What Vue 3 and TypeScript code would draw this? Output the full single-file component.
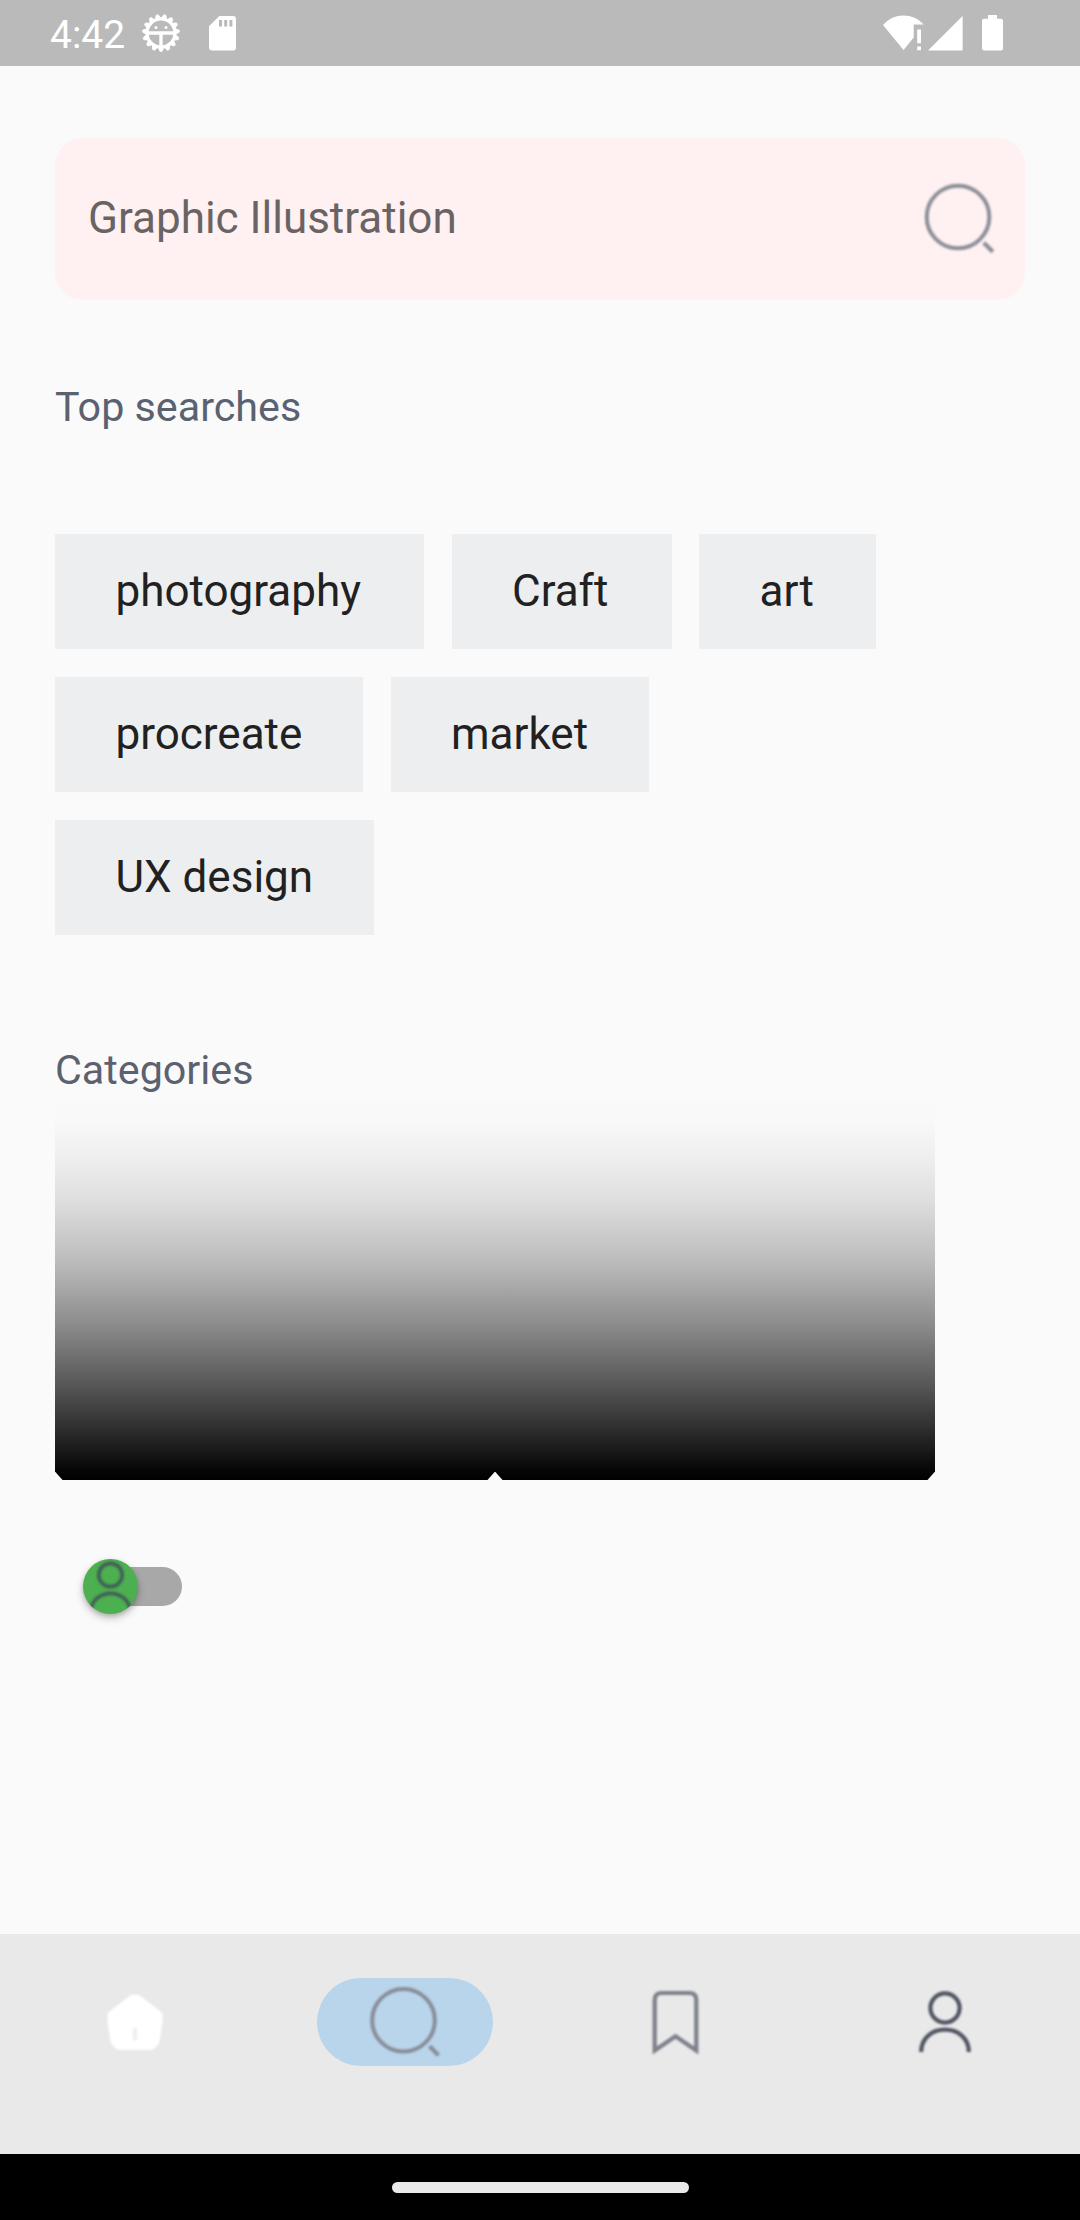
<script setup lang="ts">
interface Term {
  label: string
  width: number
}

const topSearches: Term[] = [
  { label: 'photography', width: 369 },
  { label: 'Craft', width: 220 },
  { label: 'art', width: 176.5 },
  { label: 'procreate', width: 308 },
  { label: 'market', width: 258.5 },
  { label: 'UX design', width: 319 },
]

// Teeth of the status bar gear, spread evenly round the ring.
const teeth: number[] = Array.from({ length: 15 }, (_, i) => 12 + i * 24)
</script>

<template>
  <div class="screen">
    <header class="status">
      <span class="time">4:42</span>
      <svg class="gear" width="40" height="40" viewBox="-20 -20 40 40">
        <path v-for="a in teeth" :key="a" d="M-3-14L-1-18.400H1L3-14Z" fill="#fff" stroke="#fff" stroke-width="0.8" stroke-linejoin="round" :transform="`rotate(${a})`" />
        <circle r="13.9" fill="none" stroke="#fff" stroke-width="3" />
        <path d="M-13 0H13M0 0V14" fill="none" stroke="#fff" stroke-width="3.4" />
        <circle cx="-5" cy="-5.6" r="1.5" fill="#fff" />
        <circle cx="5" cy="-5.6" r="1.5" fill="#fff" />
      </svg>
      <svg class="sd" width="27" height="35" viewBox="0 0 27 35">
        <path d="M10.300 0H24Q27 0 27 3V31.500Q27 34.500 24 34.500H3Q0 34.500 0 31.500V10.300Z" fill="#fff" />
        <path d="M10 4h3v6.500h-3zM15.200 4h3v6.500h-3zM20.400 4h3v6.500h-3z" fill="#bababa" />
      </svg>
      <span class="spacer"></span>
      <svg class="wifi" width="42" height="36" viewBox="0 0 42 36">
        <path d="M0 10Q8.500 .6 20.500 .6T40.500 9.200V9.500H30.700V22.500L20.500 35Z" fill="#fff" />
        <path d="M34.200 14.500H38V28.300H34.200ZM34.200 31.500H38V35.300H34.200Z" fill="#fff" />
      </svg>
      <svg class="signal" width="35" height="35" viewBox="0 0 35 35">
        <path d="M34.600 0V34.600H0Z" fill="#fff" />
      </svg>
      <svg class="battery" width="21" height="36" viewBox="0 0 21 36">
        <path d="M6 0H15V3.800H19Q21 3.800 21 5.800V33.500Q21 35.500 19 35.500H2Q0 35.500 0 33.500V5.800Q0 3.800 2 3.800H6Z" fill="#fff" />
      </svg>
    </header>

    <main class="content">
      <div class="search">
        <span>Graphic Illustration</span>
        <svg class="soft" width="76" height="76" viewBox="0 0 76 76">
          <circle cx="36" cy="36" r="31.300" fill="none" stroke="#8c8f97" stroke-width="4" />
          <path d="M61.800 61.800L70.800 70.800" stroke="#8c8f97" stroke-width="4.200" />
        </svg>
      </div>

      <h2 class="top-title">Top searches</h2>
      <div class="chips">
        <span v-for="term in topSearches" :key="term.label" class="chip" :style="{ width: `${term.width}px` }">{{ term.label }}</span>
      </div>

      <h2 class="cat-title">Categories</h2>
      <div class="cards">
        <div class="card"></div>
        <div class="card"></div>
      </div>

      <div class="switch">
        <div class="thumb">
          <svg class="soft" width="55" height="55" viewBox="0 0 55 55">
            <circle cx="27.500" cy="16" r="11.700" fill="none" stroke="#435f58" stroke-width="3.700" />
            <path d="M8 52C8 42 17 34.300 27.500 34.300S47 42 47 52" fill="none" stroke="#435f58" stroke-width="3.700" />
          </svg>
        </div>
      </div>
    </main>

    <nav class="nav">
      <div class="item">
        <svg class="soft" width="76" height="76" viewBox="0 0 76 76">
          <path d="M34 10.700H42L65.500 29V37L62.500 58Q60 63 55.500 65.700H20.500Q16 63 13.500 58L10.500 37V29Z" fill="#fff" />
          <rect x="35.700" y="43.500" width="4.600" height="13" rx="2" fill="#efefef" />
        </svg>
      </div>
      <div class="item">
        <div class="pill">
          <svg class="soft" width="76" height="76" viewBox="0 0 76 76">
            <circle cx="36.500" cy="36.300" r="31.300" fill="none" stroke="#888d98" stroke-width="4" />
            <path d="M62.500 62.300L71.500 71.300" stroke="#888d98" stroke-width="4.200" />
          </svg>
        </div>
      </div>
      <div class="item">
        <svg class="soft" width="76" height="76" viewBox="0 0 76 76">
          <path d="M17.700 66.500V16Q17.700 9 24.700 9H52.300Q59.300 9 59.300 16V66.500L38.500 52.200Z" fill="none" stroke="#7c808a" stroke-width="4.200" />
        </svg>
      </div>
      <div class="item">
        <svg class="soft" width="76" height="76" viewBox="0 0 76 76">
          <circle cx="38" cy="24" r="14.600" fill="none" stroke="#505562" stroke-width="4.200" />
          <path d="M14.200 68C14.200 54 25 45.700 38 45.700S61.800 54 61.800 68" fill="none" stroke="#505562" stroke-width="4.200" />
        </svg>
      </div>
    </nav>
    <footer class="gesture"><span></span></footer>
  </div>
</template>

<style>
body {
  margin: 0;
  background: #fafafa;
}
</style>

<style scoped>
.screen {
  width: 1080px;
  height: 2220px;
  display: flex;
  flex-direction: column;
  background: #fafafa;
  font-family: Roboto, sans-serif;
  overflow: hidden;
}
.status {
  height: 66px;
  flex: none;
  box-sizing: border-box;
  background: #bababa;
  display: flex;
  align-items: center;
  padding: 0 77px 0 50px;
}
.time {
  color: #fff;
  font-size: 39px;
  line-height: 46px;
  width: 91px;
  margin-top: 4px;
  white-space: nowrap;
}
.sd {
  margin: 1px 0 0 28px;
}
.spacer {
  flex: 1;
}
.signal {
  margin-left: 3px;
}
.battery {
  margin-left: 19px;
}
.content {
  flex: 1;
  padding: 71.5px 55px 0;
}
.search {
  height: 162px;
  box-sizing: border-box;
  border-radius: 27.5px;
  background: #fff0f2;
  display: flex;
  align-items: center;
  justify-content: space-between;
  padding: 0 27.5px 0 33px;
  color: #696363;
  font-size: 44px;
}
.search span {
  padding-bottom: 2px;
}
.search svg {
  margin-top: 1px;
}
h2 {
  margin: 0;
  font-weight: 400;
  font-size: 41.25px;
  line-height: 48px;
  color: #5c6170;
}
.top-title {
  margin-top: 83px;
}
.chips {
  display: flex;
  flex-wrap: wrap;
  gap: 27.5px;
  width: 880px;
  margin-top: 103px;
}
.chip {
  box-sizing: border-box;
  height: 115.5px;
  line-height: 114px;
  padding-left: 60.5px;
  background: #edeef0;
  color: #212121;
  font-size: 44px;
  white-space: nowrap;
}
.cat-title {
  margin-top: 111px;
}
.cards {
  display: flex;
  margin-top: 6px;
}
.card {
  width: 440px;
  height: 380px;
  clip-path: polygon(0 0, 100% 0, 100% 371.5px, 436.5px 375.5px, 432.5px 100%, 7.5px 100%, 3.5px 375.5px, 0 371.5px);
  background: linear-gradient(to bottom, #fafafa 0%, #f8f8f8 6%, #f0f0f0 14%, #dfdfdf 26%, #bdbdbd 42%, #8f8f8f 58%, #5c5c5c 73.5%, #303030 86%, #060606 97.5%, #000 100%);
}
.switch {
  width: 90.750px;
  height: 38.500px;
  margin: 87px 0 0 36px;
  border-radius: 20px;
  background: #a8a8a8;
  display: flex;
  align-items: center;
}
.thumb {
  width: 55px;
  height: 55px;
  flex: none;
  margin-left: -8.500px;
  border-radius: 50%;
  background: #4caf50;
  overflow: hidden;
  box-shadow: 0 4px 8px rgba(0, 0, 0, 0.22), 0 2px 4px rgba(0, 0, 0, 0.15);
}
.soft {
  display: block;
  filter: blur(0.8px);
}
.nav {
  height: 220px;
  flex: none;
  box-sizing: border-box;
  background: #e9e9e9;
  display: flex;
  padding-top: 44px;
}
.item {
  flex: 1;
  height: 88px;
  display: flex;
  align-items: center;
  justify-content: center;
}
.pill {
  width: 176px;
  height: 88px;
  border-radius: 44px;
  background: #b9d5ec;
  display: flex;
  align-items: center;
  justify-content: center;
}
.gesture {
  height: 66px;
  flex: none;
  background: #000;
  display: flex;
  align-items: center;
  justify-content: center;
}
.gesture span {
  width: 297px;
  height: 11px;
  border-radius: 6px;
  background: #eaeaea;
}
</style>
